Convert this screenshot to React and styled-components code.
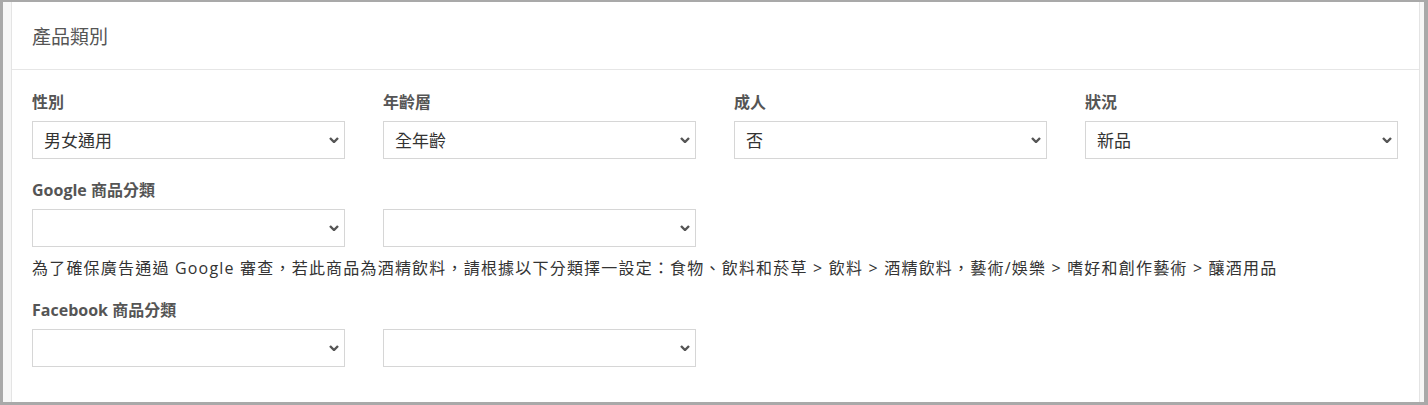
import React from 'react';
import styled, { createGlobalStyle } from 'styled-components';

const GlobalStyle = createGlobalStyle`
  html, body {
    margin: 0;
    padding: 0;
    background: #a9a9a9;
  }
  body {
    font-family: 'Open Sans', 'Noto Sans CJK TC', sans-serif;
  }
`;

const Frame = styled.div`
  box-sizing: border-box;
  width: 1428px;
  height: 405px;
  padding: 2px 4px 3px 3px;
  overflow: hidden;
`;

const Viewport = styled.div`
  height: 100%;
  background: #f7f7f7;
  padding: 0 4px 0 8px;
  overflow: hidden;
`;

const Card = styled.section`
  height: 100%;
  background: #fff;
  border-left: 1px solid #e4e4e4;
  border-right: 1px solid #e4e4e4;
`;

const CardHeader = styled.header`
  height: 67px;
  display: flex;
  align-items: center;
  padding: 0 20px;
  border-bottom: 1px solid #e6e6e6;
`;

const Title = styled.h3`
  margin: 0;
  font-size: 19px;
  font-weight: 400;
  color: #555;
`;

const CardBody = styled.div`
  padding: 21px 21px 0 20px;
`;

const FieldGrid = styled.div`
  display: grid;
  grid-template-columns: repeat(4, 1fr);
  column-gap: 38px;
`;

const Field = styled.div`
  display: flex;
  flex-direction: column;
  gap: 8px;
  margin-top: ${(p) => (p.$spaced ? '20px' : '0')};
`;

const Label = styled.label`
  font-size: 16px;
  line-height: 22px;
  font-weight: 700;
  color: #555;
`;

const SelectWrap = styled.div`
  position: relative;
  height: 38px;
`;

const Select = styled.select`
  appearance: none;
  box-sizing: border-box;
  width: 100%;
  height: 38px;
  margin: 0;
  padding: 0 28px 0 11px;
  border: 1px solid #d6d6d6;
  border-radius: 0;
  background: #fff;
  font-family: 'Open Sans', 'Noto Sans CJK TC', sans-serif;
  font-size: 17px;
  color: #333;
  outline: none;
`;

const Chevron = styled.svg`
  position: absolute;
  right: 6px;
  top: 50%;
  width: 10px;
  height: 6px;
  margin-top: -3px;
  pointer-events: none;
`;

const Help = styled.p`
  margin: 10px 0 0;
  font-size: 16px;
  line-height: 22px;
  letter-spacing: 1.2px;
  color: #333;
`;

const Dropdown = ({ value }) => (
  <SelectWrap>
    <Select defaultValue={value || ''}>
      <option value={value || ''}>{value || ''}</option>
    </Select>
    <Chevron viewBox="0 0 10 6">
      <polyline points="1,1 5,5 9,1" fill="none" stroke="#555" strokeWidth="2.4" />
    </Chevron>
  </SelectWrap>
);

const basics = [
  { label: '性別', value: '男女通用' },
  { label: '年齡層', value: '全年齡' },
  { label: '成人', value: '否' },
  { label: '狀況', value: '新品' },
];

export default function App() {
  return (
    <>
      <GlobalStyle />
      <Frame>
        <Viewport>
          <Card>
            <CardHeader>
              <Title>產品類別</Title>
            </CardHeader>
            <CardBody>
              <FieldGrid>
                {basics.map((f) => (
                  <Field key={f.label}>
                    <Label>{f.label}</Label>
                    <Dropdown value={f.value} />
                  </Field>
                ))}
              </FieldGrid>

              <Field $spaced>
                <Label>Google 商品分類</Label>
                <FieldGrid>
                  <Dropdown />
                  <Dropdown />
                </FieldGrid>
              </Field>
              <Help>
                為了確保廣告通過 Google 審查，若此商品為酒精飲料，請根據以下分類擇一設定：食物、飲料和菸草 &gt; 飲料 &gt; 酒精飲料，藝術/娛樂 &gt; 嗜好和創作藝術 &gt; 釀酒用品
              </Help>

              <Field $spaced>
                <Label>Facebook 商品分類</Label>
                <FieldGrid>
                  <Dropdown />
                  <Dropdown />
                </FieldGrid>
              </Field>
            </CardBody>
          </Card>
        </Viewport>
      </Frame>
    </>
  );
}
